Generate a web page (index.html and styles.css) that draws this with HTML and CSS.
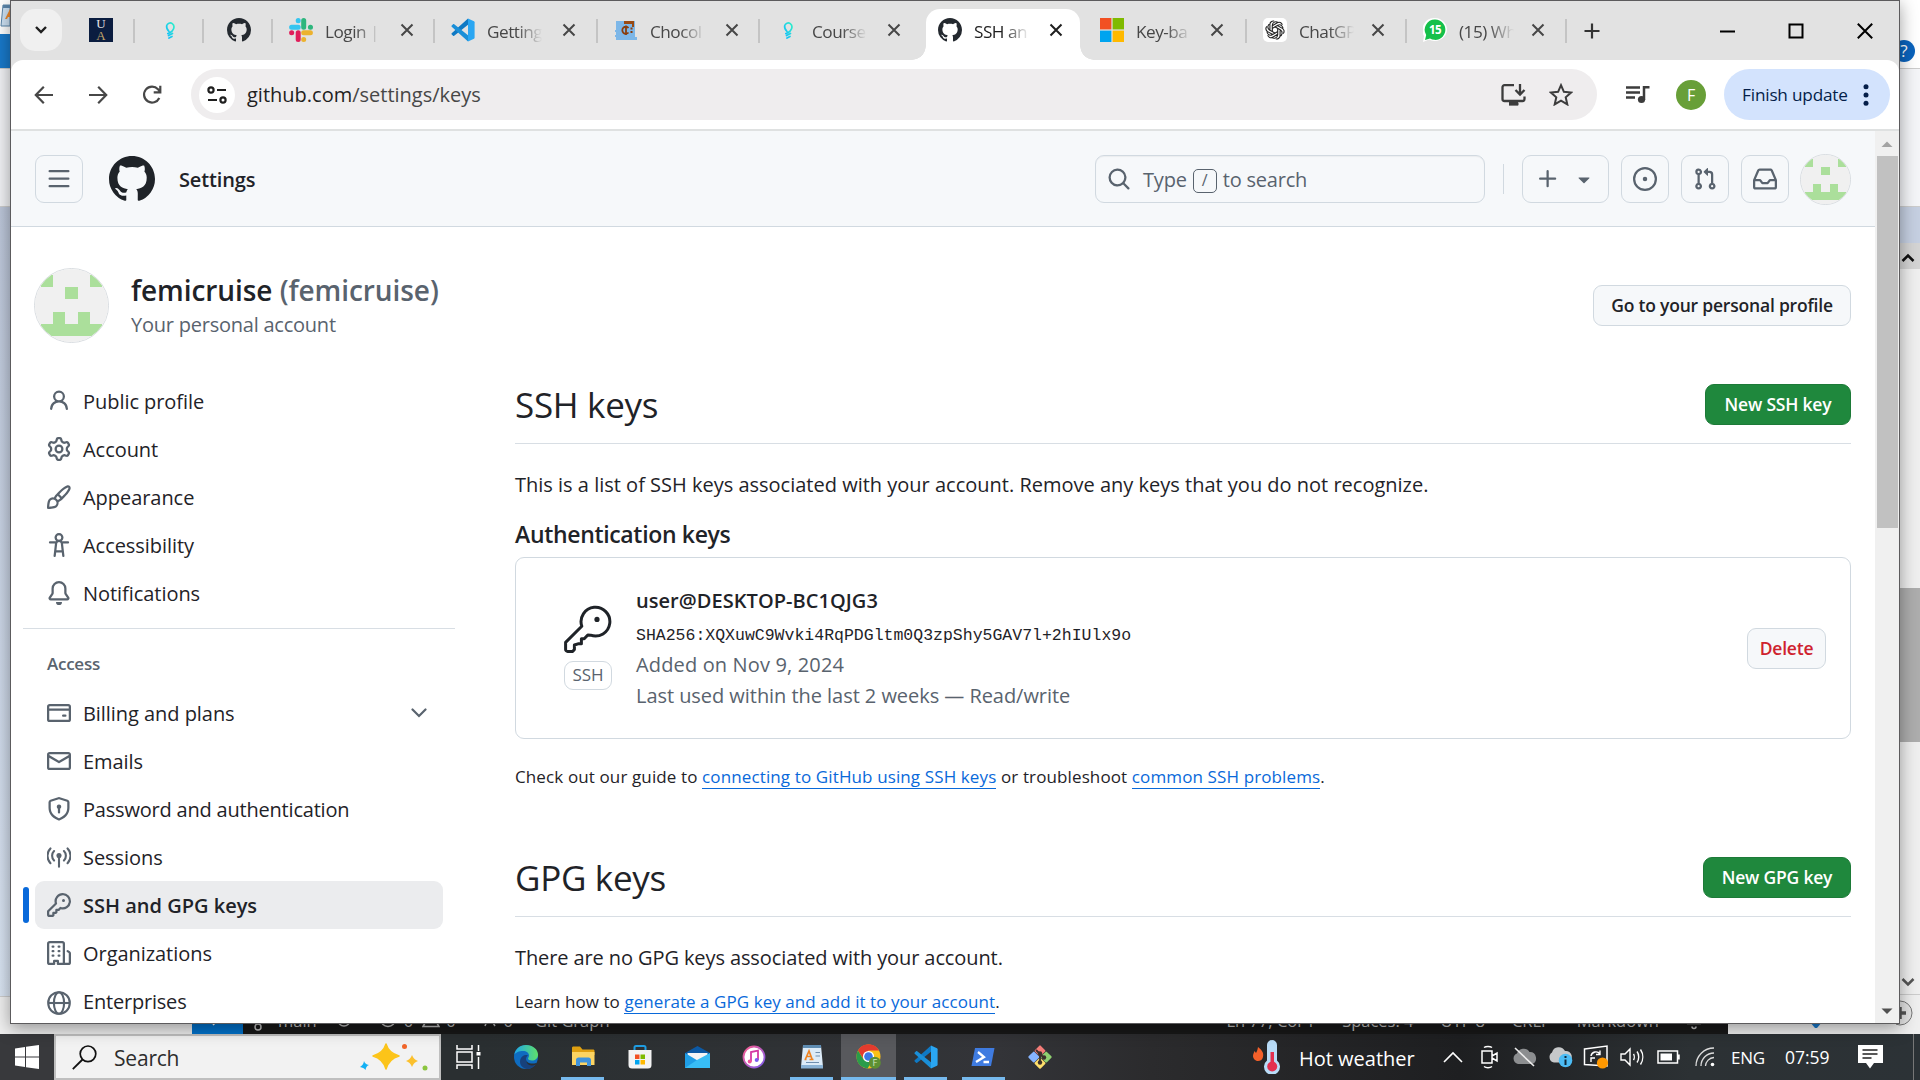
FILE: index.html
```html
<!DOCTYPE html>
<html lang="en">
<head>
<meta charset="utf-8">
<title>SSH and GPG keys</title>
<link rel="stylesheet" href="styles.css">
</head>
<body>
<svg class="defs" width="0" height="0">
  <symbol id="github" viewBox="0 0 16 16"><path d="M8 0c4.42 0 8 3.58 8 8a8.013 8.013 0 0 1-5.45 7.59c-.4.08-.55-.17-.55-.38 0-.27.01-1.13.01-2.2 0-.75-.25-1.23-.54-1.48 1.78-.2 3.65-.88 3.65-3.95 0-.88-.31-1.59-.82-2.15.08-.2.36-1.02-.08-2.12 0 0-.67-.22-2.2.82-.64-.18-1.32-.27-2-.27-.68 0-1.36.09-2 .27-1.53-1.03-2.2-.82-2.2-.82-.44 1.1-.16 1.92-.08 2.12-.51.56-.82 1.28-.82 2.15 0 3.06 1.86 3.75 3.64 3.95-.23.2-.44.55-.51 1.07-.46.21-1.61.55-2.33-.66-.15-.24-.6-.83-1.23-.82-.67.01-.27.38.01.53.34.19.73.9.82 1.13.16.45.68 1.31 2.69.94 0 .67.01 1.3.01 1.49 0 .21-.15.45-.55.38A7.995 7.995 0 0 1 0 8c0-4.42 3.58-8 8-8Z"/></symbol>
  <symbol id="close" viewBox="0 0 14 14"><path d="M1.5 1.5l11 11M12.5 1.5l-11 11" stroke="currentColor" stroke-width="2" fill="none"/></symbol>
  <symbol id="bulb" viewBox="0 0 24 24"><path d="M11 13.500c-2-2.200-2.700-4-2.300-5.900.6-2.300 3.500-3.400 5.600-2 2.300 1.600 2.300 5-.2 7.500-1.200 1.300-2.600 2-4.300 2.500M10.500 17.500l4-2M11 20l3-1.500" fill="none" stroke="url(#bulbfill)" stroke-width="1.700" stroke-linecap="round"/></symbol>
  <symbol id="vscode" viewBox="0 0 24 24"><path d="M17 .5v6.200L3.200 17.800c-.4.300-.8.300-1.100 0L.7 16.500c-.4-.4-.4-.9 0-1.200Z" fill="#0f79c4"/><path d="M17 23.500v-6.200L3.200 6.200c-.4-.3-.8-.3-1.100 0L.7 7.500c-.4.4-.4.900 0 1.200Z" fill="#1a8fd8"/><path d="M17 .5 23 3.300c.4.200.6.500.6 1v15.400c0 .5-.2.800-.6 1L17 23.500Z" fill="#2aa6f2"/></symbol>
  <symbol id="identicon" viewBox="0 0 72 72"><rect width="72" height="72" fill="#f0f0f0"/><path d="M6 6h12v12H6zM54 6h12v12H54zM30 18h12v12H30zM18 42h12v12H18zM42 42h12v12H42zM6 54h60v12H6z" fill="#abdf9b" shape-rendering="crispEdges"/></symbol>
  <linearGradient id="bulbfill" x1="1" y1="0" x2="0" y2="1"><stop offset="0" stop-color="#2ff0c8"/><stop offset="1" stop-color="#10b8ff"/></linearGradient>
  <linearGradient id="edgefill" x1="0" y1="0" x2="1" y2="0"><stop offset="0" stop-color="#1fa7e8"/><stop offset="1" stop-color="#5fe06a"/></linearGradient>
  <linearGradient id="tunes" x1="0" y1="0" x2="1" y2="1"><stop offset="0" stop-color="#fb5c8d"/><stop offset="1" stop-color="#7b5cf0"/></linearGradient>
</svg>

<div class="desktop">
  <div class="edge edge-left">
    <div class="el-doc"><svg width="10" height="30" viewBox="0 0 10 30"><path d="M3 5h7v21H1z" fill="#cfe3f5" stroke="#5b86ab"/><path d="M3 5h7v3H3z" fill="#5b86ab"/><path d="M10 9 5 19h2l1-2h2z" fill="#f08a2c"/></svg></div>
    <div class="el-blue"></div>
    <div class="el-ribbon"></div>
    <div class="el-canvas"></div>
    <div class="el-foot"></div>
  </div>
  <div class="edge edge-right">
    <div class="er-title"><span class="help">?</span></div>
    <div class="er-ribbon"></div>
    <div class="er-ruler"></div>
    <div class="er-up"><svg width="14" height="10" viewBox="0 0 14 10"><path d="M1.500 8 7 2.500 12.500 8" fill="none" stroke="#111" stroke-width="2.500"/></svg></div>
    <div class="er-track"><div class="er-thumb"></div></div>
    <div class="er-down"><svg width="14" height="10" viewBox="0 0 14 10"><path d="M1.500 2 7 7.500 12.500 2" fill="none" stroke="#555" stroke-width="2.500"/></svg></div>
    <div class="er-zoom"><svg width="22" height="26" viewBox="0 0 22 26"><circle cx="4" cy="13" r="12" fill="#e4e4e4" stroke="#777"/><path d="M-2 13H10M4 7v12" stroke="#555" stroke-width="3.500"/></svg></div>
  </div>
  <div class="editor-bar">
    <div class="eb-remote"><svg width="14" height="14" viewBox="0 0 14 14"><path d="M3 1l5 5M4 13l5-5" stroke="#fff" stroke-width="1.600" fill="none"/></svg></div>
    <div class="eb-status">
      <svg width="12" height="22" viewBox="0 0 12 22"><circle cx="5" cy="17" r="3" fill="none" stroke="#bbb" stroke-width="1.500"/><path d="M5 3v11" stroke="#bbb" stroke-width="1.500"/></svg>
      <span class="eb-main">main</span>
      <svg class="eb-sync" width="14" height="22" viewBox="0 0 14 22"><circle cx="7" cy="10" r="6" fill="none" stroke="#bbb" stroke-width="1.500"/></svg>
      <svg class="eb-err" width="18" height="22" viewBox="0 0 18 22"><circle cx="9" cy="9" r="7.500" fill="none" stroke="#bbb" stroke-width="1.500"/></svg>
      <span>0</span>
      <svg class="eb-warn" width="18" height="22" viewBox="0 0 18 22"><path d="M1 16.500 9 3l8 13.500z" fill="none" stroke="#bbb" stroke-width="1.500"/></svg>
      <span>0</span>
      <svg class="eb-port" width="14" height="22" viewBox="0 0 14 22"><path d="M2 16l2-5h5l3 5" fill="none" stroke="#bbb" stroke-width="1.500"/></svg>
      <span>0</span>
      <span class="eb-git">Git Graph</span>
      <div class="eb-right"><span>Ln 77, Col 1</span><span>Spaces: 4</span><span>UTF-8</span><span>CRLF</span><span>Markdown</span><svg width="16" height="22" viewBox="0 0 16 22"><path d="M1 13.500h14M8 3v10M6 16.500a2 2 0 0 0 4 0" fill="none" stroke="#bbb" stroke-width="1.600"/></svg></div>
    </div>
    <div class="eb-tail"><svg width="12" height="8" viewBox="0 0 12 8"><path d="M0 0h12L7 6H5z" fill="#1979ca"/></svg></div>
  </div>
</div>

<div class="window">
  <div class="tabstrip">
    <div class="tab-search"><svg width="14" height="10" viewBox="0 0 14 10"><path d="M2 2l5 5 5-5" fill="none" stroke="#1f1f1f" stroke-width="2.400"/></svg></div>
    <div class="pinned p1"><span class="ua"><i>U</i><b>A</b></span></div>
    <div class="pinned"><svg width="24" height="24"><use href="#bulb"/></svg></div>
    <div class="pinned"><svg width="24" height="24" fill="#24292f"><use href="#github"/></svg></div>
    <div class="tab t1">
      <svg class="fav" width="24" height="24" viewBox="0 0 24 24"><g stroke-width="5" stroke-linecap="round"><path d="M9.200 2.600v.1M2.600 9.300H9.200" stroke="#36c5f0"/><path d="M14.700 2.600V9.200M21.400 9.300h.1" stroke="#2eb67d"/><path d="M14.700 21.400v.1M14.700 14.800H21.400" stroke="#ecb22e"/><path d="M9.200 14.800V21.400M2.600 14.800h.1" stroke="#e01e5a"/></g></svg>
      <span class="title">Login |</span><svg class="x" width="14" height="14"><use href="#close"/></svg></div>
    <div class="tab t2"><svg class="fav" width="24" height="24"><use href="#vscode"/></svg><span class="title">Getting</span><svg class="x" width="14" height="14"><use href="#close"/></svg></div>
    <div class="tab t3"><svg class="fav" width="24" height="24" viewBox="0 0 24 24"><path d="M2 3h19v16h2v3H2v-3H1v-2h1v-3H1v-2h1z" fill="#7db7e8"/><path d="M10 3h10v6h-2V6h-8z" fill="#9a4a12"/><path d="M14.500 10a3.500 3.500 0 1 0 0 4.500M12 7.500v9.500" fill="none" stroke="#8a3d0c" stroke-width="1.800"/><path d="M16.500 10.500h2M16.500 14h2" stroke="#8a3d0c" stroke-width="2"/></svg><span class="title">Chocol</span><svg class="x" width="14" height="14"><use href="#close"/></svg></div>
    <div class="tab t4 nosep"><svg class="fav" width="24" height="24"><use href="#bulb"/></svg><span class="title">Course</span><svg class="x" width="14" height="14"><use href="#close"/></svg></div>
    <div class="tab t5 active nosep"><svg class="fav" width="24" height="24" fill="#24292f"><use href="#github"/></svg><span class="title">SSH an</span><svg class="x" width="14" height="14"><use href="#close"/></svg></div>
    <div class="tab t6"><svg class="fav" width="24" height="24" viewBox="0 0 24 24"><path d="M0 0h11.400v11.400H0z" fill="#f25022"/><path d="M12.600 0H24v11.400H12.600z" fill="#7fba00"/><path d="M0 12.600h11.400V24H0z" fill="#00a4ef"/><path d="M12.600 12.600H24V24H12.600z" fill="#ffb900"/></svg><span class="title">Key-ba</span><svg class="x" width="14" height="14"><use href="#close"/></svg></div>
    <div class="tab t7"><svg class="fav" width="24" height="24" viewBox="0 0 24 24"><rect width="24" height="24" rx="5" fill="#fff"/><g fill="none" stroke="#222" stroke-width="1.100" stroke-linejoin="round"><path id="petal" d="M9.300 13.700V7.200a3.500 3.500 0 0 1 6-2.300M9.300 7.700l5-2.900a3.400 3.400 0 0 1 5 2"/><use href="#petal" transform="rotate(60 12 12)"/><use href="#petal" transform="rotate(120 12 12)"/><use href="#petal" transform="rotate(180 12 12)"/><use href="#petal" transform="rotate(240 12 12)"/><use href="#petal" transform="rotate(300 12 12)"/></g></svg><span class="title">ChatGP</span><svg class="x" width="14" height="14"><use href="#close"/></svg></div>
    <div class="tab t8"><svg class="fav" width="24" height="24" viewBox="0 0 24 24"><path d="M12 0a12 11.500 0 1 1-6 21.500L0 24l1-6A12 12 0 0 1 12 0z" fill="#fff"/><path d="M12 1.500a10.200 10.200 0 1 1-5 19L2 22l1.200-5A10.200 10.200 0 0 1 12 1.500z" fill="#15c04a"/><text x="12" y="16" text-anchor="middle" class="wa">15</text></svg><span class="title">(15) Wh</span><svg class="x" width="14" height="14"><use href="#close"/></svg></div>
    <svg class="newtab" width="16" height="16" viewBox="0 0 16 16"><path d="M8 .5v15M.5 8h15" stroke="#333" stroke-width="2.200"/></svg>
    <div class="caption">
      <svg width="16" height="16" viewBox="0 0 16 16"><path d="M1 8.500h15" stroke="#000" stroke-width="2"/></svg>
      <svg width="16" height="16" viewBox="0 0 16 16"><path d="M1.500 1.500h13v13h-13z" fill="none" stroke="#000" stroke-width="2"/></svg>
      <svg width="16" height="16" viewBox="0 0 16 16"><path d="M.8.800l14.400 14.400M15.200.8.800 15.200" stroke="#000" stroke-width="2"/></svg>
    </div>
  </div>

  <div class="toolbar">
    <svg class="nav-btn" width="20" height="20" viewBox="0 0 20 20"><path d="M19 10H2.500M9.800 1.800 1.800 10l8 8.200" fill="none" stroke="#474747" stroke-width="2.200"/></svg>
    <svg class="nav-btn" width="20" height="20" viewBox="0 0 20 20"><path d="M1 10h16.500M10.200 1.800l8 8.200-8 8.200" fill="none" stroke="#474747" stroke-width="2.200"/></svg>
    <svg class="nav-btn" width="20" height="20" viewBox="0 0 20 20"><path d="M17.300 13a8 8 0 1 1-1.300-8.800l2 2.300M18.300.8v6.600h-6.600" fill="none" stroke="#474747" stroke-width="2.200"/></svg>
    <div class="omnibox">
      <span class="site"><svg width="20" height="18" viewBox="0 0 20 18"><g fill="none" stroke="#1f1f1f" stroke-width="2.200"><circle cx="4" cy="4" r="2.600"/><path d="M10 4h9M1 14h9"/><circle cx="16" cy="14" r="2.600"/></g></svg></span>
      <span class="url"><b>github.com</b>/settings/keys</span>
      <svg width="25" height="22" viewBox="0 0 25 22"><path d="M13 1.200H3.500a2 2 0 0 0-2 2V15a2 2 0 0 0 2 2h18a2 2 0 0 0 2-2v-2.500M19 0v9.500M14.500 6l4.500 4.500L23.500 6M8 20h9.500" fill="none" stroke="#3c3c3c" stroke-width="2.300"/><path d="M8 17h9v4.500H8z" fill="#3c3c3c"/></svg>
      <svg class="star" width="24" height="23" viewBox="0 0 24 23"><path d="M12 2.200l2.900 6.600 7.200.7-5.400 4.800 1.600 7.100L12 17.700l-6.300 3.700 1.600-7.100L1.900 9.500l7.200-.7z" fill="none" stroke="#3c3c3c" stroke-width="2"/></svg>
    </div>
    <svg class="music" width="24" height="20" viewBox="0 0 24 20"><path d="M0 2.500h14M0 7.500h14M0 12.500h9" stroke="#3c3c3c" stroke-width="2.300"/><circle cx="15.500" cy="14.500" r="3.600" fill="#3c3c3c"/><path d="M18 15V2.300h5.500" fill="none" stroke="#3c3c3c" stroke-width="2.500"/></svg>
    <span class="profile">F</span>
    <div class="update"><span>Finish update</span><svg width="6" height="22" viewBox="0 0 6 22"><g fill="#041e49"><circle cx="3" cy="2.700" r="2.500"/><circle cx="3" cy="11" r="2.500"/><circle cx="3" cy="19.300" r="2.500"/></g></svg></div>
  </div>

  <div class="viewport">
    <div class="page">
      <header class="gh-head">
        <span class="hbtn"><svg class="oct" viewBox="0 0 16 16"><path d="M1 2.750A.75.750 0 0 1 1.750 2h12.500a.75.750 0 0 1 0 1.500H1.750A.75.750 0 0 1 1 2.750Zm0 5A.75.750 0 0 1 1.750 7h12.500a.75.750 0 0 1 0 1.500H1.750A.75.750 0 0 1 1 7.750ZM1.750 12h12.500a.75.750 0 0 1 0 1.500H1.750a.75.750 0 0 1 0-1.500Z"/></svg></span>
        <svg class="logo" width="46" height="46"><use href="#github"/></svg>
        <span class="crumb">Settings</span>
        <div class="search"><svg class="oct" viewBox="0 0 16 16"><path d="M10.680 11.740a6 6 0 0 1-7.922-8.982 6 6 0 0 1 8.982 7.922l3.040 3.040a.749.749 0 0 1-.326 1.275.749.749 0 0 1-.734-.215ZM11.500 7a4.499 4.499 0 1 0-8.997 0A4.499 4.499 0 0 0 11.500 7Z"/></svg><span>Type</span><kbd>/</kbd><span>to search</span></div>
        <i class="vr"></i>
        <span class="hbtn add"><svg class="oct" viewBox="0 0 16 16"><path d="M7.750 2a.75.750 0 0 1 .75.750V7h4.250a.75.750 0 0 1 0 1.500H8.500v4.250a.75.750 0 0 1-1.500 0V8.500H2.750a.75.750 0 0 1 0-1.500H7V2.750A.75.750 0 0 1 7.750 2Z"/></svg><svg class="oct" viewBox="0 0 16 16"><path d="m4.427 7.427 3.396 3.396a.25.250 0 0 0 .354 0l3.396-3.396A.25.250 0 0 0 11.396 7H4.604a.25.250 0 0 0-.177.427Z"/></svg></span>
        <span class="hbtn"><svg class="oct" viewBox="0 0 16 16"><path d="M8 9.500a1.500 1.500 0 1 0 0-3 1.500 1.500 0 0 0 0 3Z"/><path d="M8 0a8 8 0 1 1 0 16A8 8 0 0 1 8 0ZM1.500 8a6.500 6.500 0 1 0 13 0 6.500 6.500 0 0 0-13 0Z"/></svg></span>
        <span class="hbtn"><svg class="oct" viewBox="0 0 16 16"><path d="M1.500 3.250a2.250 2.250 0 1 1 3 2.122v5.256a2.251 2.251 0 1 1-1.500 0V5.372A2.250 2.250 0 0 1 1.500 3.250Zm5.677-.177L9.573.677A.25.250 0 0 1 10 .854V2.500h1A2.500 2.500 0 0 1 13.500 5v5.628a2.251 2.251 0 1 1-1.500 0V5a1 1 0 0 0-1-1h-1v1.646a.25.250 0 0 1-.427.177L7.177 3.427a.25.250 0 0 1 0-.354ZM3.750 2.500a.75.750 0 1 0 0 1.500.75.750 0 0 0 0-1.500Zm0 9.500a.75.750 0 1 0 0 1.500.75.750 0 0 0 0-1.500Zm8.250.750a.75.750 0 1 0 1.500 0 .75.750 0 0 0-1.500 0Z"/></svg></span>
        <span class="hbtn"><svg class="oct" viewBox="0 0 16 16"><path d="M2.800 2.060A1.750 1.750 0 0 1 4.410 1h7.180c.7 0 1.333.417 1.610 1.060l2.740 6.395c.04.093.06.194.06.295v4.500A1.750 1.750 0 0 1 14.250 15H1.750A1.750 1.750 0 0 1 0 13.250v-4.500c0-.101.02-.202.06-.295Zm1.610.440a.25.250 0 0 0-.23.152L1.887 8H4.750a.75.750 0 0 1 .6.300L6.625 10h2.750l1.275-1.700a.75.750 0 0 1 .6-.3h2.863L11.820 2.652a.25.250 0 0 0-.23-.152Zm10.090 7h-2.875l-1.275 1.700a.75.750 0 0 1-.6.300h-3.500a.75.750 0 0 1-.6-.3L4.375 9.500H1.500v3.750c0 .138.112.250.25.250h12.500a.25.250 0 0 0 .25-.25Z"/></svg></span>
        <svg class="me"><use href="#identicon"/></svg>
      </header>

      <section class="account">
        <svg class="avatar"><use href="#identicon"/></svg>
        <div class="who"><h1>femicruise <span>(femicruise)</span></h1><p>Your personal account</p></div>
        <a class="btn go">Go to your personal profile</a>
      </section>

      <div class="cols">
        <nav>
          <a><svg class="oct" viewBox="0 0 16 16"><path d="M10.561 8.073a6.005 6.005 0 0 1 3.432 5.142.75.750 0 1 1-1.498.070 4.500 4.500 0 0 0-8.990 0 .75.750 0 0 1-1.498-.070 6.004 6.004 0 0 1 3.431-5.142 3.999 3.999 0 1 1 5.123 0ZM10.500 5a2.500 2.500 0 1 0-5 0 2.500 2.500 0 0 0 5 0Z"/></svg><span>Public profile</span></a>
          <a><svg class="oct" viewBox="0 0 16 16"><path d="M8 0a8.200 8.200 0 0 1 .701.031C9.444.095 9.990.645 10.160 1.290l.288 1.107c.018.066.079.158.212.224.231.114.454.243.668.386.123.082.233.090.299.071l1.103-.303c.644-.176 1.392.021 1.820.630.270.385.506.792.704 1.218.315.675.111 1.422-.364 1.891l-.814.806c-.049.048-.098.147-.088.294.016.257.016.515 0 .772-.010.147.038.246.088.294l.814.806c.475.469.679 1.216.364 1.891a7.977 7.977 0 0 1-.704 1.217c-.428.610-1.176.807-1.820.630l-1.102-.302c-.067-.019-.177-.011-.300.071a5.909 5.909 0 0 1-.668.386c-.133.066-.194.158-.211.224l-.290 1.106c-.168.646-.715 1.196-1.458 1.260a8.006 8.006 0 0 1-1.402 0c-.743-.064-1.289-.614-1.458-1.260l-.289-1.106c-.018-.066-.079-.158-.212-.224a5.738 5.738 0 0 1-.668-.386c-.123-.082-.233-.090-.299-.071l-1.103.303c-.644.176-1.392-.021-1.820-.630a8.120 8.120 0 0 1-.704-1.218c-.315-.675-.111-1.422.363-1.891l.815-.806c.050-.048.098-.147.088-.294a6.214 6.214 0 0 1 0-.772c.010-.147-.038-.246-.088-.294l-.815-.806C.635 6.045.431 5.298.746 4.623a7.920 7.920 0 0 1 .704-1.217c.428-.610 1.176-.807 1.820-.630l1.102.302c.067.019.177.011.300-.071.214-.143.437-.272.668-.386.133-.066.194-.158.211-.224l.290-1.106C6.009.645 6.556.095 7.299.030 7.530.010 7.764 0 8 0Zm-.571 1.525c-.036.003-.108.036-.137.146l-.289 1.105c-.147.561-.549.967-.998 1.189-.173.086-.340.183-.500.290-.417.278-.970.423-1.529.270l-1.103-.303c-.109-.030-.175.016-.195.045-.220.312-.412.644-.573.990-.014.031-.021.110.059.190l.815.806c.411.406.562.957.530 1.456a4.709 4.709 0 0 0 0 .582c.032.499-.119 1.050-.530 1.456l-.815.806c-.081.080-.073.159-.059.190.162.346.353.677.573.989.020.030.085.076.195.046l1.102-.303c.560-.153 1.113-.008 1.530.270.161.107.328.204.501.290.447.222.850.629.997 1.189l.289 1.105c.029.109.101.143.137.146a6.600 6.600 0 0 0 1.142 0c.036-.003.108-.036.137-.146l.289-1.105c.147-.561.549-.967.998-1.189.173-.086.340-.183.500-.290.417-.278.970-.423 1.529-.270l1.103.303c.109.029.175-.016.195-.045.220-.313.411-.644.573-.990.014-.031.021-.110-.059-.190l-.815-.806c-.411-.406-.562-.957-.530-1.456a4.709 4.709 0 0 0 0-.582c-.032-.499.119-1.050.530-1.456l.815-.806c.081-.080.073-.159.059-.190a6.464 6.464 0 0 0-.573-.989c-.020-.030-.085-.076-.195-.046l-1.102.303c-.560.153-1.113.008-1.530-.270a4.440 4.440 0 0 0-.501-.290c-.447-.222-.850-.629-.997-1.189l-.289-1.105c-.029-.110-.101-.143-.137-.146a6.600 6.600 0 0 0-1.142 0ZM11 8a3 3 0 1 1-6 0 3 3 0 0 1 6 0ZM9.500 8a1.500 1.500 0 1 0-3.001.001A1.500 1.500 0 0 0 9.500 8Z"/></svg><span>Account</span></a>
          <a><svg class="oct" viewBox="0 0 16 16"><path d="M11.134 1.535c.7-.509 1.416-.942 2.076-1.155.649-.210 1.463-.267 2.069.340.603.601.568 1.411.368 2.070-.202.668-.624 1.390-1.125 2.096-1.011 1.424-2.496 2.987-3.775 4.249-1.098 1.084-2.132 1.839-3.040 2.300a3.744 3.744 0 0 1-1.055 3.217c-.431.431-1.065.691-1.657.861-.614.177-1.294.287-1.914.357A21.151 21.151 0 0 1 .797 16H.743l.007-.75H.749L.742 16a.75.750 0 0 1-.743-.742l.743-.008-.742.007v-.054a21.250 21.250 0 0 1 .130-2.284c.067-.647.187-1.287.358-1.914.170-.591.430-1.226.860-1.657a3.746 3.746 0 0 1 3.227-1.054c.466-.893 1.225-1.907 2.314-2.982 1.271-1.255 2.833-2.750 4.246-3.776ZM1.620 13.089c-.051.464-.086.929-.104 1.395.466-.018.932-.053 1.396-.104a10.511 10.511 0 0 0 1.668-.309c.526-.151.856-.325 1.011-.480a2.250 2.250 0 1 0-3.182-3.182c-.155.155-.329.485-.480 1.010a10.515 10.515 0 0 0-.309 1.670Zm10.396-10.340c-1.224.890-2.605 2.189-3.822 3.384l1.718 1.718c1.210-1.205 2.510-2.597 3.387-3.833.470-.662.780-1.227.912-1.662.134-.444.032-.551.009-.575h-.001V1.780c-.014-.014-.113-.113-.548.027-.432.140-.995.462-1.655.942Zm-4.832 7.266-.001.001a9.859 9.859 0 0 0 1.630-1.142L7.155 7.216a9.700 9.700 0 0 0-1.161 1.607c.482.302.889.710 1.190 1.192Z"/></svg><span>Appearance</span></a>
          <a><svg class="oct" viewBox="0 0 16 16"><path d="M9.923 5.302c.063.063.122.129.178.198H14A.75.750 0 0 1 14 7h-3.300l.578 5.163.362 2.997a.75.750 0 0 1-1.490.180L9.868 13H6.132l-.282 2.340a.75.750 0 0 1-1.490-.180l.362-2.997L5.300 7H2a.75.750 0 0 1 0-1.500h3.900a2.540 2.540 0 0 1 .176-.198 3 3 0 1 1 3.847 0ZM9.200 7.073h-.001a1.206 1.206 0 0 0-2.398 0L6.305 11.500h3.390ZM9.500 3a1.500 1.500 0 1 0-3.001.001A1.500 1.500 0 0 0 9.500 3Z"/></svg><span>Accessibility</span></a>
          <a><svg class="oct" viewBox="0 0 16 16"><path d="M8 16a2 2 0 0 0 1.985-1.750c.017-.137-.097-.250-.235-.250h-3.500c-.138 0-.252.113-.235.250A2 2 0 0 0 8 16ZM3 5a5 5 0 0 1 10 0v2.947c0 .050.015.098.042.139l1.703 2.555A1.519 1.519 0 0 1 13.482 13H2.518a1.516 1.516 0 0 1-1.263-2.360l1.703-2.554A.255.255 0 0 0 3 7.947Zm5-3.500A3.500 3.500 0 0 0 4.500 5v2.947c0 .346-.102.683-.294.970l-1.703 2.556a.017.017 0 0 0-.003.010l.001.006c0 .002.002.004.004.006l.006.004.007.001h10.964l.007-.001.006-.004.004-.006.001-.007a.017.017 0 0 0-.003-.010l-1.703-2.554a1.745 1.745 0 0 1-.294-.970V5A3.500 3.500 0 0 0 8 1.500Z"/></svg><span>Notifications</span></a>
          <hr>
          <h3>Access</h3>
          <a><svg class="oct" viewBox="0 0 16 16"><path d="M10.750 9a.75.750 0 0 0 0 1.500h1.500a.75.750 0 0 0 0-1.500h-1.500Z"/><path d="M0 3.750C0 2.784.784 2 1.750 2h12.500c.966 0 1.750.784 1.750 1.750v8.500A1.750 1.750 0 0 1 14.250 14H1.750A1.750 1.750 0 0 1 0 12.250ZM14.500 6.500h-13v5.750c0 .138.112.250.250.250h12.500a.25.250 0 0 0 .250-.250Zm0-2.750a.25.250 0 0 0-.250-.250H1.750a.25.250 0 0 0-.250.250V5h13Z"/></svg><span>Billing and plans</span><svg class="chev" width="16" height="10" viewBox="0 0 16 10"><path d="M1.500 1.500 8 8l6.500-6.500" fill="none" stroke="#59636e" stroke-width="2.200" stroke-linecap="round"/></svg></a>
          <a><svg class="oct" viewBox="0 0 16 16"><path d="M1.750 2h12.500c.966 0 1.750.784 1.750 1.750v8.500A1.750 1.750 0 0 1 14.250 14H1.750A1.750 1.750 0 0 1 0 12.250v-8.500C0 2.784.784 2 1.750 2ZM1.500 12.251c0 .138.112.250.250.250h12.500a.25.250 0 0 0 .250-.250V5.809L8.380 9.397a.75.750 0 0 1-.760 0L1.500 5.809v6.442Zm13-8.181v-.320a.25.250 0 0 0-.250-.250H1.750a.25.250 0 0 0-.250.250v.320L8 7.880Z"/></svg><span>Emails</span></a>
          <a><svg class="oct" viewBox="0 0 16 16"><path d="m8.533.133 5.250 1.680A1.750 1.750 0 0 1 15 3.480V7c0 1.566-.320 3.182-1.303 4.682-.983 1.498-2.585 2.813-5.032 3.855a1.697 1.697 0 0 1-1.330 0c-2.447-1.042-4.049-2.357-5.032-3.855C1.320 10.182 1 8.566 1 7V3.480a1.755 1.755 0 0 1 1.217-1.667l5.250-1.680a1.748 1.748 0 0 1 1.066 0Zm-.610 1.429.001.001-5.250 1.680a.251.251 0 0 0-.174.237V7c0 1.360.275 2.666 1.057 3.859.784 1.194 2.121 2.342 4.366 3.298a.196.196 0 0 0 .154 0c2.245-.957 3.582-2.103 4.366-3.297C13.225 9.666 13.500 8.358 13.500 7V3.480a.25.250 0 0 0-.174-.238l-5.250-1.680a.25.250 0 0 0-.153 0ZM9.500 6.500c0 .536-.286 1.032-.750 1.300v2.450a.75.750 0 0 1-1.500 0V7.800A1.500 1.500 0 1 1 9.500 6.500Z"/></svg><span class="tight">Password and authentication</span></a>
          <a><svg class="oct" viewBox="0 0 16 16"><g fill="none" stroke="#59636e" stroke-width="1.400" stroke-linecap="round"><path d="M2.300 2.300a7 7 0 0 0 0 9.800M13.700 2.300a7 7 0 0 1 0 9.800M4.700 4a4.600 4.600 0 0 0 0 6.400M11.300 4a4.600 4.600 0 0 1 0 6.400M8 8v6.500"/></g><circle cx="8" cy="7" r="1.700"/></svg><span>Sessions</span></a>
          <a class="sel"><svg class="oct" viewBox="0 0 16 16"><path d="M10.500 0a5.499 5.499 0 1 1-1.288 10.848l-.932.932a.749.749 0 0 1-.530.220H7v.750a.749.749 0 0 1-.220.530l-.500.500a.749.749 0 0 1-.530.220H5v.750a.749.749 0 0 1-.220.530l-.500.500a.749.749 0 0 1-.530.220h-2A1.750 1.750 0 0 1 0 14.250v-2c0-.199.079-.389.220-.530l4.932-4.932A5.500 5.500 0 0 1 10.500 0Zm-4 5.500c-.001.431.069.860.205 1.269a.75.750 0 0 1-.181.768L1.500 12.560v1.690c0 .138.112.250.250.250h1.690l.060-.060v-1.190a.75.750 0 0 1 .750-.750h1.190l.060-.060v-1.190a.75.750 0 0 1 .750-.750h1.190l1.023-1.025a.75.750 0 0 1 .768-.180A4 4 0 1 0 6.500 5.500ZM11 6a1 1 0 1 1 0-2 1 1 0 0 1 0 2Z"/></svg><span>SSH and GPG keys</span></a>
          <a><svg class="oct" viewBox="0 0 16 16"><path d="M1.750 16A1.750 1.750 0 0 1 0 14.250V1.750C0 .784.784 0 1.750 0h8.500C11.216 0 12 .784 12 1.750v12.500c0 .085-.006.168-.018.250h2.268a.25.250 0 0 0 .250-.250V8.285a.25.250 0 0 0-.111-.208l-1.055-.703a.749.749 0 1 1 .832-1.248l1.055.703c.487.325.779.871.779 1.456v5.965A1.750 1.750 0 0 1 14.250 16h-3.500a.766.766 0 0 1-.197-.026c-.099.017-.200.026-.303.026h-3a.75.750 0 0 1-.750-.750V14h-1v1.250a.75.750 0 0 1-.750.750Zm-.250-1.750c0 .138.112.250.250.250H4v-1.250a.75.750 0 0 1 .750-.750h2.500a.75.750 0 0 1 .750.750v1.250h2.250a.25.250 0 0 0 .250-.250V1.750a.25.250 0 0 0-.250-.250h-8.500a.25.250 0 0 0-.250.250ZM3.750 6h.500a.75.750 0 0 1 0 1.500h-.500a.75.750 0 0 1 0-1.500ZM3 3.750A.75.750 0 0 1 3.750 3h.500a.75.750 0 0 1 0 1.500h-.500A.75.750 0 0 1 3 3.750Zm4 3A.75.750 0 0 1 7.750 6h.500a.75.750 0 0 1 0 1.500h-.500A.75.750 0 0 1 7 6.750ZM7.750 3h.500a.75.750 0 0 1 0 1.500h-.500a.75.750 0 0 1 0-1.500ZM3 9.750A.75.750 0 0 1 3.750 9h.500a.75.750 0 0 1 0 1.500h-.500A.75.750 0 0 1 3 9.750ZM7.750 9h.500a.75.750 0 0 1 0 1.500h-.500a.75.750 0 0 1 0-1.500Z"/></svg><span>Organizations</span></a>
          <a><svg class="oct low" viewBox="0 0 16 16"><g fill="none" stroke="#59636e" stroke-width="1.400"><circle cx="8" cy="8" r="7.200"/><ellipse cx="8" cy="8" rx="3.400" ry="7.200"/><path d="M1 8h14"/></g></svg><span class="tight">Enterprises</span></a>
        </nav>

        <main>
          <div class="subhead"><h2>SSH keys</h2><a class="btn green">New SSH key</a></div>
          <p class="lead">This is a list of SSH keys associated with your account. Remove any keys that you do not recognize.</p>
          <h4>Authentication keys</h4>
          <div class="card">
            <div class="keycol"><svg width="48" height="48" viewBox="0 0 24 24"><path d="M8.900 10.600A7.200 7.200 0 1 1 13.300 15.100L11.900 15 10.100 16.900H8.700V19.400H7L5.200 20V22.200L4.300 23.200H1.800A1 1 0 0 1 .8 22.200V18.700z" fill="none" stroke="#1f2328" stroke-width="1.500" stroke-linejoin="round"/><circle cx="16.500" cy="7.200" r="1.300" fill="#1f2328"/></svg><span class="badge">SSH</span></div>
            <div class="info"><strong>user@DESKTOP-BC1QJG3</strong><code>SHA256:XQXuwC9Wvki4RqPDGltm0Q3zpShy5GAV7l+2hIUlx9o</code><span class="added">Added on Nov 9, 2024</span><span class="used">Last used within the last 2 weeks — Read/write</span></div>
            <a class="btn del">Delete</a>
          </div>
          <p class="note">Check out our guide to <a>connecting to GitHub using SSH keys</a> or troubleshoot <a>common SSH problems</a>.</p>
          <div class="subhead second"><h2>GPG keys</h2><a class="btn green gpg">New GPG key</a></div>
          <p class="lead none">There are no GPG keys associated with your account.</p>
          <p class="note learn">Learn how to <a>generate a GPG key and add it to your account</a>.</p>
        </main>
      </div>
    </div>
    <div class="scroll">
      <svg width="24" height="25" viewBox="0 0 24 25"><path d="M6.500 16 12 10.500 17.500 16z" fill="#a3a3a3"/></svg>
      <div class="thumb"></div>
      <svg class="down" width="24" height="25" viewBox="0 0 24 25"><path d="M6.500 10.500h11L12 16z" fill="#505050"/></svg>
    </div>
  </div>
</div>

<div class="taskbar">
  <div class="start"><svg width="24" height="24" viewBox="0 0 24 24"><path d="M0 3.400 10 2v9.500H0zM11 1.800 24 0v11.500H11zM0 12.500h10V22L0 20.600zM11 12.500h13V24l-13-1.800z" fill="#fff"/></svg></div>
  <div class="tsearch"><svg width="25" height="25" viewBox="0 0 25 25"><circle cx="16" cy="8.800" r="7.800" fill="none" stroke="#111" stroke-width="1.700"/><path d="M10.500 14.500.8 24.200" stroke="#111" stroke-width="1.800"/></svg><span>Search</span>
    <svg class="spark" width="70" height="28" viewBox="0 0 70 28"><path d="M27 1c2 7 6 10 13 12-7 2-11 6-13 13-2-7-6-11-13-13 7-2 11-5 13-12z" fill="#fcc419" stroke="#fcc419" stroke-width="1.500" stroke-linejoin="round"/><path d="M53 12c1 3 3 5 6 6-3 1-5 3-6 6-1-3-3-5-6-6 3-1 5-3 6-6z" fill="#fbc02d"/><path d="M5 18c.700 2 2 3.500 5 4-2.500 1-3 2.500-3.500 5-1.500-2-3-2.500-5.500-3 2.500-1.500 3.500-3 4-6z" fill="#12b0f4"/><circle cx="45.500" cy="3.500" r="2.500" fill="#f1652a"/><circle cx="66" cy="25" r="2.500" fill="#8bc53f"/></svg></div>
  <div class="apps">
    <div class="tv"><svg width="25" height="24" viewBox="0 0 25 24"><g fill="none" stroke="#fff" stroke-width="1.500"><path d="M1 0v4h15V0M1 7h15v10H1zM1 24v-4h15v4M22.500 0v6M22.500 12v12"/></g><path d="M20.500 7h4v3.500h-4z" fill="#fff"/></svg></div>
    <div><svg width="24" height="24" viewBox="0 0 24 24"><circle cx="12" cy="12" r="12" fill="#0f6cc0"/><path d="M.3 10C1 4 6 0 12 0c7 0 12 4.500 12 9.500 0 4-3 6-6 6-2.500 0-4-1-4-2 0-.800 1-1.200 1-3C15 8 12.500 6 9 6 5 6 1.500 7.500.3 10z" fill="url(#edgefill)"/><path d="M14 10.500c-1.500 1-2 2.500-2 4 0 4 4 6.500 10.500 4C20 22.500 16 24 13 24c-6-1-8-6-6.500-10C7.500 11 11 9 14 10.500z" fill="#17417c"/><path d="M12.500 14.500c0 3.500 4 5 10 3.500l-.8 1.800c-6 2-10-.8-9.200-5.300z" fill="#2b2e31"/></svg></div>
    <div class="run"><svg width="24" height="22" viewBox="0 0 24 22"><path d="M1 2c0-1 .5-1.500 1.500-1.500H9l2.500 3H22c1 0 1.500.5 1.500 1.500v4H1z" fill="#e0a010"/><path d="M1 6h22.500v13H1z" fill="#fcd462"/><path d="M5 20v-6c0-1.500 1-2.500 2.500-2.500h10c1.500 0 2.500 1 2.500 2.500v6h-4v-3.500H9V20z" fill="#3f93dc"/></svg></div>
    <div><svg width="24" height="24" viewBox="0 0 24 24"><path d="M6.500 6V2.500c0-1 .6-1.500 1.500-1.500h8c.9 0 1.500.6 1.500 1.500V6" fill="none" stroke="#1f9de2" stroke-width="2"/><path d="M.5 5h23v15a3.500 3.500 0 0 1-3.500 3.500H4A3.500 3.500 0 0 1 .5 20z" fill="#f3f3f3"/><path d="M7 9.500h4.500V14H7z" fill="#f25022"/><path d="M12.500 9.500H17V14h-4.500z" fill="#7fba00"/><path d="M7 15h4.500v4.500H7z" fill="#00a4ef"/><path d="M12.500 15H17v4.500h-4.500z" fill="#ffb900"/></svg></div>
    <div><svg width="25" height="24" viewBox="0 0 25 24"><path d="M0 8 12.500 1 25 8v4H0z" fill="#0c59a4"/><path d="M2.500 8h20v12h-20z" fill="#f5f5f5"/><path d="M0 8v15h25z" fill="#1f9ee6"/><path d="M25 8v15H0l12-8z" fill="#38bdf5"/></svg></div>
    <div><svg width="24" height="24" viewBox="0 0 24 24"><circle cx="12" cy="12" r="10.500" fill="#fff" stroke="url(#tunes)" stroke-width="1.800"/><path d="M9 16.500V7l7-1.500V15" fill="none" stroke="#d43aa4" stroke-width="1.800"/><circle cx="7.700" cy="16.500" r="2" fill="#f0509a"/><circle cx="14.700" cy="15" r="2" fill="#7a5cf0"/></svg></div>
    <div class="run"><svg width="24" height="26" viewBox="0 0 24 26"><path d="M3 1.500h18l2 21.500H1z" fill="#dcebf8"/><path d="M3 1h18v3H3z" fill="#5f8db3"/><path d="M1 21h22v3.500H1z" fill="#8ab2d5"/><path d="M15.500 8.500H20M15.500 12H20M6 18.500h13" stroke="#6f8fb0" stroke-width="1.200"/><path d="M4.500 15.500h2M9.500 15.500h4M5.500 15 9 7l3 8M7 12.500h4" fill="none" stroke="#ee8322" stroke-width="1.700"/></svg></div>
    <div class="run on"><svg width="26" height="26" viewBox="0 0 26 26"><circle cx="12.500" cy="12.500" r="12" fill="#fbc116"/><path d="M2 6.500A12 12 0 0 1 23 6.500H12.500L7.500 15z" fill="#e33b2e"/><path d="M2 6.500A12 12 0 0 0 11.500 24.500L17 15.500 7.500 15.500z" fill="#2a9c4a"/><circle cx="12.500" cy="12.500" r="5.600" fill="#fff"/><circle cx="12.500" cy="12.500" r="4.300" fill="#3b78e7"/><circle cx="18.800" cy="18.800" r="6" fill="#5d9033"/><text x="18.800" y="22" text-anchor="middle" class="cf">F</text></svg></div>
    <div class="run"><svg width="24" height="24"><use href="#vscode"/></svg></div>
    <div class="run"><svg width="24" height="20" viewBox="0 0 24 20"><path d="M4 1h19.500L20 19H.5z" fill="#3f7be0"/><path d="M7 5l6 5-8 5M12.500 15H18" fill="none" stroke="#fff" stroke-width="2.300"/></svg></div>
    <div><svg width="26" height="26" viewBox="0 0 26 26"><g transform="rotate(45 13 13)"><rect x="4.500" y="4.500" width="8.300" height="8.300" rx="1" fill="#f47c78"/><rect x="13.300" y="4.500" width="8.300" height="8.300" rx="1" fill="#8fd070"/><rect x="4.500" y="13.300" width="8.300" height="8.300" rx="1" fill="#86b4ff"/><rect x="13.300" y="13.300" width="8.300" height="8.300" rx="1" fill="#ffdf6b"/></g><path d="M9 6l8 8M13 9v10" stroke="#3a2f2b" stroke-width="1.800"/><g fill="#3a2f2b"><circle cx="13" cy="9.500" r="2.200"/><circle cx="17" cy="13.500" r="2.200"/><circle cx="13" cy="18.500" r="2.200"/></g></svg></div>
  </div>
  <div class="tray">
    <svg class="thermo" width="28" height="34" viewBox="0 0 28 34"><path d="M5 7c4 3 6 6 5 10-.700 3-3 4-5 4s-5-2-5-5c0-2 1-3 1.500-5l1.500 2c1-2 1.500-3 2-6z" fill="#f4602a"/><path d="M14 5a5 5 0 0 1 10 0v15.500a8 8 0 1 1-10 0z" fill="#b9dcf7"/><path d="M17.500 12h3.500v12h-3.500z" fill="#e3304f"/><circle cx="19.200" cy="26.500" r="5" fill="#e3304f"/></svg>
    <span class="wx">Hot weather</span>
    <svg class="i1" width="20" height="12" viewBox="0 0 20 12"><path d="M1 11l9-9 9 9" fill="none" stroke="#fff" stroke-width="1.600"/></svg>
    <svg class="i2" width="18" height="24" viewBox="0 0 18 24"><path d="M1 6h10v12H1zM11 11l5-3v8l-5-3M3 2.500c2-1.500 6-1.500 8 0M3 21.500c2 1.500 6 1.500 8 0" fill="none" stroke="#fff" stroke-width="1.500"/></svg>
    <svg class="i3" width="25" height="20" viewBox="0 0 25 20"><path d="M6 17a5.500 5.500 0 0 1-1-10.500A7 7 0 0 1 17.500 5 6.200 6.200 0 0 1 20 17z" fill="#8c8e90"/><path d="M3 1l19 18" stroke="#eee" stroke-width="1.600"/></svg>
    <svg class="i4" width="25" height="22" viewBox="0 0 25 22"><path d="M6 16.500A5.500 5.500 0 0 1 4 6.500 7 7 0 0 1 17 5a5 5 0 0 1 2 11.500z" fill="#c6c8ca"/><circle cx="17.500" cy="14.500" r="6.800" fill="#4cbcf5"/><path d="M17.500 10v2M17.500 13.500V19" stroke="#10283a" stroke-width="2"/></svg>
    <svg class="i5" width="26" height="24" viewBox="0 0 26 24"><path d="M1.500 4 24 1v20l-22.500-1.500z" fill="none" stroke="#fff" stroke-width="1.500"/><path d="M8 11a5 5 0 0 1 9-2M17 5.500V9.500h-4M8 17v-4h4" fill="none" stroke="#fff" stroke-width="1.400"/><circle cx="19.500" cy="18" r="5.600" fill="#ff9800"/></svg>
    <svg class="i6" width="24" height="20" viewBox="0 0 24 20"><path d="M1 7h4l5-5v16l-5-5H1zM13.500 7c1 1.500 1 4.500 0 6M17 4.500c2.300 3 2.300 8 0 11M20.500 2.500c3 4.500 3 10.500 0 15" fill="none" stroke="#fff" stroke-width="1.400"/></svg>
    <svg class="i7" width="24" height="14" viewBox="0 0 24 14"><path d="M1 1h19.500v12H1zM22 4.500v5" fill="none" stroke="#fff" stroke-width="1.500"/><path d="M3.500 3.500H15v7H3.500z" fill="#fff"/></svg>
    <svg class="i8" width="20" height="20" viewBox="0 0 20 20"><g fill="none" stroke="#ddd" stroke-width="1.300"><path d="M1 19A18 18 0 0 1 19 1M6 19A13 13 0 0 1 19 6M10.500 19A9 9 0 0 1 19 10.500"/></g><circle cx="17.500" cy="17.500" r="1.800" fill="#fff"/></svg>
    <span class="lang">ENG</span><span class="clock">07:59</span>
    <svg class="note-ic" width="25" height="24" viewBox="0 0 25 24"><path d="M0 0h25v18H16l-4 5.500L8 18H0z" fill="#fff"/><path d="M4.500 5h15M4.500 9h15M4.500 13h9" stroke="#222" stroke-width="1.400"/></svg>
    <i class="peek"></i>
  </div>
</div>
</body>
</html>
```
FILE: styles.css
```css
* { box-sizing: border-box; }
body { margin: 0; width: 1920px; height: 1080px; overflow: hidden; position: relative; font-family: "Open Sans", "Noto Sans", sans-serif; background: #ececec; color: #1f2328; }
h1, h2, h3, h4, p { margin: 0; font-weight: 400; }
svg { display: block; flex: none; }
.defs { position: absolute; }

/* Desktop behind the browser window */
.desktop { position: absolute; inset: 0 0 46px 0; }
.edge { position: absolute; top: 0; bottom: 0; display: flex; flex-direction: column; }
.edge-left { left: 0; width: 20px; }
.edge-right { right: 0; width: 24px; z-index: 1; }
.el-doc { height: 34px; background: #fff; }
.el-blue { height: 34px; background: #1979ca; }
.el-ribbon { height: 139px; background: #f1f2f5; border-top: 1px solid #ccc; border-bottom: 1px solid #ccc; }
.el-canvas { height: 789px; background: linear-gradient(#bcc6d9, #d9e4f2); }
.el-foot { flex: 1; background: #efefef; border-top: 1px solid #ccc; }
.er-title { height: 69px; background: #fff; border-bottom: 1px solid #ccc; padding-top: 40px; }
.help { display: block; width: 22px; height: 22px; margin-left: -3px; border-radius: 50%; background: #0a63bd; color: #fff; font-size: 17px; line-height: 22px; text-align: center; }
.er-ribbon { height: 138px; background: #f4f5f8; border-bottom: 1px solid #ccc; }
.er-ruler { height: 36px; background: #c5cfe1; }
.er-up { height: 26px; background: #d4d4d4; padding: 10px 0 0 5px; }
.er-track { height: 700px; background: #efefef; padding-top: 319px; }
.er-thumb { height: 154px; background: #adadad; }
.er-down { height: 26px; background: #efefef; padding: 8px 0 0 5px; border-bottom: 1px solid #ccc; }
.er-zoom { flex: 1; background: #efefef; padding-top: 5px; }
.editor-bar { position: absolute; left: 0; right: 0; bottom: 0; height: 26px; display: flex; }
.eb-remote { margin-left: 192px; width: 51px; background: #0070c8; padding: 4px 0 0 17px; }
.eb-status { width: 1485px; background: #181818; display: flex; align-items: center; color: #bbb; font-size: 16.500px; line-height: 22px; padding: 0 26px 1px 10px; }
.eb-main { margin: 0 20px 0 13px; }
.eb-sync { margin-right: 28px; }
.eb-err { margin-right: 7px; }
.eb-warn { margin: 0 6px 0 9px; }
.eb-port { margin: 0 7px 0 27px; }
.eb-git { margin-left: 22px; }
.eb-right { margin-left: auto; display: flex; gap: 27px; }
.eb-tail { flex: 1; background: #efefef; padding: 14px 0 0 82px; }

/* Browser window */
.window { position: absolute; z-index: 2; left: 10px; top: 0; width: 1890px; height: 1024px; border: 1px solid #5c5b5d; background: #e2e2e2; box-shadow: 0 4px 16px rgba(0, 0, 0, .38); display: flex; flex-direction: column; }
.tabstrip { height: 59px; display: flex; flex: none; align-items: stretch; }
.tab-search { width: 42px; height: 42px; margin: 8px 5px 0 9px; border-radius: 15px; background: #f0f0f0; display: grid; place-items: center; }
.pinned { width: 69px; padding: 17px 0 0 23px; position: relative; }
.p1 { width: 68px; padding-left: 22px; }
.pinned::after, .tab:not(.nosep)::after { content: ""; position: absolute; right: 0; top: 18px; width: 2px; height: 24px; background: #c4c4c4; }
.ua { display: block; width: 24px; height: 24px; background: #0b1d40; font-family: "Liberation Serif", serif; font-size: 13px; line-height: 12px; text-align: center; }
.ua i, .ua b { display: block; font-style: normal; font-weight: 400; color: #e8e8e8; }
.ua b { color: #c0a368; }
.tab { position: relative; width: 162px; display: flex; align-items: flex-start; padding: 17px 0 0 16px; color: #474747; }
.t2, .t4, .t6 { width: 163px; }
.t7, .t8 { width: 160px; }
.t5 { width: 161px; padding-left: 15px; z-index: 1; }
.title { margin: -1px 0 0 12px; width: 60px; height: 30px; white-space: nowrap; font-size: 17.200px; line-height: 30px; letter-spacing: -.5px; -webkit-mask-image: linear-gradient(90deg, #000 50%, transparent 92%); mask-image: linear-gradient(90deg, #000 50%, transparent 92%); }
.x { margin: 5px 0 0 15px; }
.t6 .x { margin-left: 14px; }
.t7 .x, .t8 .x { margin-left: 12px; }
.active { color: #1f1f1f; }
.active::before { content: ""; position: absolute; z-index: -1; left: 3px; width: 154px; top: 8px; bottom: 0; background: #fff; border-radius: 14px 14px 0 0; }
.active::after { content: ""; position: absolute; z-index: -1; left: -11px; right: -10px; bottom: 0; height: 14px; background: radial-gradient(circle at 0 0, transparent 13.500px, #fff 14px) left / 14px 14px no-repeat, radial-gradient(circle at 100% 0, transparent 13.500px, #fff 14px) right / 14px 14px no-repeat; }
.wa { font-size: 11.500px; font-weight: 700; fill: #fff; letter-spacing: -.5px; }
.newtab { margin: 22px 0 0 17px; }
.caption { margin: 22px 26px 0 auto; display: flex; gap: 53px; }

.toolbar { height: 71px; flex: none; background: #fff; border-radius: 12px 12px 0 0; border-bottom: 2px solid #dfe1e1; display: flex; align-items: center; padding: 0 9px 0 23px; }
.nav-btn { margin-right: 34px; }
.omnibox { margin-left: -5px; width: 1407px; height: 51px; border-radius: 26px; background: #efedee; display: flex; align-items: center; padding: 0 24px 0 8px; }
.site { width: 36px; height: 36px; border-radius: 50%; background: #fff; display: grid; place-items: center; }
.url { margin: 0 auto 0 12px; font-size: 20px; color: #474747; }
.url b { font-weight: 400; color: #1f1f1f; }
.star { margin-left: 23px; }
.music { margin: 0 26px 0 29px; }
.profile { width: 30px; height: 30px; border-radius: 50%; background: #689f38; color: #fff; font-size: 16px; line-height: 30px; text-align: center; margin-right: 18px; }
.update { width: 166px; height: 51px; border-radius: 26px; background: #d3e3fd; display: flex; align-items: center; justify-content: space-between; padding: 0 21px 0 18px; color: #041e49; font-size: 17.200px; }
.update span { white-space: nowrap; letter-spacing: -.2px; }

/* GitHub page */
.viewport { flex: 1; min-height: 0; display: flex; background: #fff; }
.page { width: 1864px; overflow: hidden; }
.oct { width: 24px; height: 24px; fill: #59636e; }
.gh-head { height: 96px; background: #f6f8fa; border-bottom: 1.500px solid #d1d9e0; display: flex; align-items: center; padding: 1px 24px 0; }
.hbtn { width: 48px; height: 48px; flex: none; border: 1.500px solid #d1d9e0; border-radius: 9px; display: flex; align-items: center; justify-content: center; margin-left: 12px; }
.hbtn:first-child { margin-left: 0; }
.logo { margin-left: 26px; fill: #1f2328; }
.crumb { margin-left: 24px; font-size: 20px; font-weight: 600; letter-spacing: -.15px; }
.search { margin-left: auto; width: 390px; height: 48px; border: 1.500px solid #d1d9e0; border-radius: 9px; display: flex; align-items: center; padding-left: 11px; font-size: 20px; color: #59636e; box-shadow: inset 0 1px 1px rgba(31, 35, 40, .05); }
.search span { padding-left: 12px; letter-spacing: -.2px; }
.search kbd { margin: 3px 0 0 6px; width: 24px; height: 24px; border: 1.500px solid #59636e; border-radius: 5px; font: 16px/21px "Open Sans", sans-serif; text-align: center; }
.search kbd + span { padding-left: 6px; }
.vr { width: 1px; height: 30px; background: #d1d9e0; margin: 0 6px 0 18px; }
.add { width: 87px; gap: 12px; }
.me, .avatar { border: 1.500px solid #d8dce0; border-radius: 50%; }
.me { width: 51px; height: 51px; margin-left: 11px; }
.account { display: flex; padding: 41px 24px 0 23px; height: 150px; }
.avatar { width: 75px; height: 75px; }
.who { margin: 0 auto 0 22px; white-space: nowrap; }
h1 { font-size: 28px; font-weight: 600; line-height: 36px; margin-top: 4px; letter-spacing: -.07px; }
h1 span { color: #59636e; }
.who p { font-size: 20px; line-height: 30px; margin-top: 2px; color: #59636e; letter-spacing: -.23px; }
.btn { height: 41px; flex: none; border: 1.500px solid #d1d9e0; border-radius: 9px; background: #f6f8fa; font-size: 17.500px; font-weight: 600; letter-spacing: -.2px; line-height: 38px; text-align: center; white-space: nowrap; }
.go { width: 258px; margin-top: 17px; }
.cols { display: flex; }
nav { width: 432px; margin-left: 12px; flex: none; }
nav a { position: relative; height: 48px; margin: 0 12px; padding: 0 16px 0 12px; display: flex; align-items: center; gap: 12px; font-size: 20px; letter-spacing: -.05px; border-radius: 9px; }
nav .tight { letter-spacing: -.2px; }
nav hr { border: 0; height: 1px; background: #d8dee4; margin: 11px 0 18px; }
nav h3 { margin: 0 0 8px 24px; font-size: 17px; font-weight: 600; line-height: 34px; color: #59636e; letter-spacing: -.25px; }
.chev { margin-left: auto; }
nav .sel { background: #ebecee; font-weight: 600; letter-spacing: 0; }
.sel::before { content: ""; position: absolute; left: -12px; top: 6px; width: 6px; height: 36px; border-radius: 3px; background: #0969da; }
.low { margin-top: 4px; }
main { margin-left: 60px; width: 1336px; }
.subhead { display: flex; justify-content: space-between; height: 67px; padding-top: 7px; border-bottom: 1px solid #d8dee4; }
h2 { font-size: 35px; line-height: 46px; margin-top: -2px; letter-spacing: -.3px; }
.green { width: 146px; background: #1f883d; border-color: #1d7a38; color: #fff; }
.gpg { width: 148px; }
.lead { font-size: 20px; line-height: 30px; margin-top: 26px; white-space: nowrap; }
.none { letter-spacing: -.1px; }
h4 { font-size: 23px; font-weight: 600; line-height: 34px; margin-top: 17px; letter-spacing: -.33px; }
.card { height: 182px; margin-top: 6px; border: 1.500px solid #d1d9e0; border-radius: 9px; display: flex; align-items: center; padding: 0 24px 0 48px; }
.keycol { width: 48px; display: flex; flex-direction: column; gap: 8px; margin-top: -1px; }
.badge { height: 29px; border: 1.500px solid #d1d9e0; border-radius: 9px; font-size: 17px; line-height: 26px; text-align: center; color: #59636e; }
.info { margin: 0 auto 2px 24px; display: flex; flex-direction: column; font-size: 20px; line-height: 31px; color: #59636e; white-space: nowrap; }
.info strong { font-weight: 600; color: #1f2328; line-height: 36px; letter-spacing: .05px; }
.info code { font: 16.500px/30px "Liberation Mono", monospace; padding-top: 2px; color: #1f2328; }
.added { margin-top: -2px; letter-spacing: .15px; }
.used { letter-spacing: -.05px; }
.del { width: 79px; color: #cf222e; }
.note { font-size: 17px; line-height: 27px; margin-top: 24px; white-space: nowrap; letter-spacing: .12px; }
.note a { color: #0969da; border-bottom: 1.500px solid #0969da; }
.second { margin-top: 60px; }
.learn { margin-top: 15px; letter-spacing: .06px; }
.scroll { width: 24px; background: #f0f0f0; display: flex; flex-direction: column; }
.thumb { margin-left: 2px; width: 21px; height: 372px; background: #c1c1c1; }
.down { margin-top: auto; }

/* Taskbar */
.taskbar { position: absolute; left: 0; right: 0; bottom: 0; height: 46px; display: flex; background: linear-gradient(90deg, #2a2f31 25%, #333438 52%, #2b2b2d 60%, #1e1f21 76%, #2c3134 88%, #2c3236); color: #fff; }
.start { width: 54px; background: #38393c; padding: 11px 0 0 15px; }
.tsearch { width: 387px; border: 2px solid #bfbfbf; background: #f2f2f2; display: flex; align-items: center; padding: 0 10px 0 16px; color: #2d2d2d; font-size: 21px; }
.tsearch span { margin: 2px auto 0 17px; letter-spacing: -.2px; }
.apps { display: flex; margin-left: -1px; }
.apps div { width: 43px; margin: 0 7.100px; display: grid; place-items: center; }
.apps .tv { width: 57px; margin: 0; }
.apps .run { border-bottom: 3px solid #76b9ed; padding-top: 3px; }
.apps .on { width: 55px; margin: 0 1.100px; background: #58595d; }
.cf { font-size: 9px; fill: #d5e8c5; }
.tray { margin-left: auto; display: flex; align-items: center; }
.wx { font-size: 20px; margin: 2px 29px 0 18px; width: 115px; white-space: nowrap; }
.i1 { margin-right: 18px; } .i2 { margin-right: 13px; } .i3 { margin-right: 11px; } .i4 { margin-right: 10px; } .i5 { margin-right: 11px; }
.i6 { margin-right: 13px; } .i7 { margin-right: 14px; } .i8 { margin-right: 16px; }
.lang { font-size: 17px; width: 35px; letter-spacing: -.3px; margin-right: 19px; }
.clock { font-size: 17.500px; width: 45px; margin-right: 28px; }
.peek { width: 1px; height: 46px; background: #777; margin: 0 6px 0 30px; }
```
